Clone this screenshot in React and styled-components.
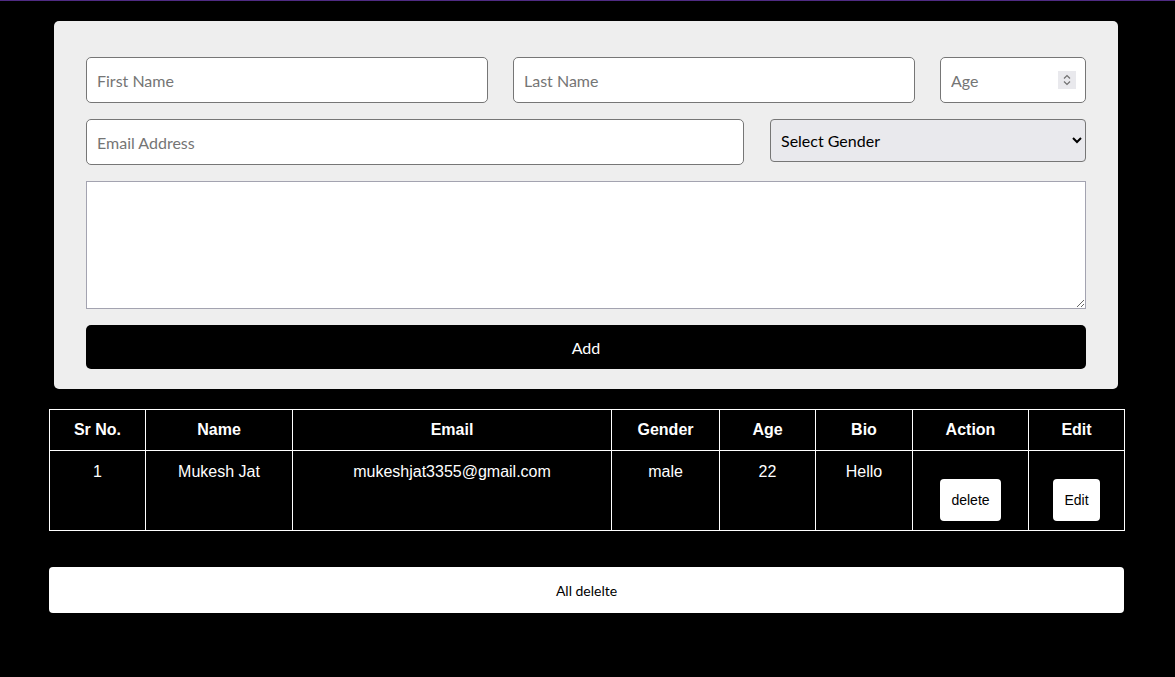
import React, { useState } from "react";
import styled, { createGlobalStyle } from "styled-components";

const GlobalStyle = createGlobalStyle`
  html, body {
    margin: 0;
    padding: 0;
    background: #000000;
  }
  body {
    font-family: "Lato", "Liberation Sans", sans-serif;
    border-top: 1px solid #4f2b83;
    min-height: 676px;
  }
  * {
    box-sizing: border-box;
  }
`;

const users = [
  {
    id: 1,
    firstName: "Mukesh",
    lastName: "Jat",
    email: "mukeshjat3355@gmail.com",
    gender: "male",
    age: 22,
    bio: "Hello",
  },
];

const columns = [
  { label: "Sr No.", width: 96 },
  { label: "Name", width: 147 },
  { label: "Email", width: 319 },
  { label: "Gender", width: 108 },
  { label: "Age", width: 96 },
  { label: "Bio", width: 97 },
  { label: "Action", width: 116 },
  { label: "Edit", width: 96 },
];

const App = () => {
  const [list, setList] = useState(users);

  return (
    <>
      <GlobalStyle />
      <Container>
        <Form onSubmit={(e) => e.preventDefault()}>
          <Row>
            <Input type="text" placeholder="First Name" />
            <Input type="text" placeholder="Last Name" />
            <NumberField>
              <Input type="number" placeholder="Age" />
              {/* spin buttons as the newer chrome draws them */}
              <Spinner viewBox="0 0 18 18">
                <path d="M6 7.5 L9 4.5 L12 7.5" />
                <path d="M6 10.5 L9 13.5 L12 10.5" />
              </Spinner>
            </NumberField>
          </Row>
          <Row className="second">
            <Input type="email" placeholder="Email Address" />
            <Select defaultValue="">
              <option value="">Select Gender</option>
              <option value="male">male</option>
              <option value="female">female</option>
            </Select>
          </Row>
          <TextArea />
          <AddButton type="submit">Add</AddButton>
        </Form>

        <Table>
          <colgroup>
            {columns.map((c) => (
              <Col key={c.label} $w={c.width} />
            ))}
          </colgroup>
          <thead>
            <tr>
              {columns.map((c) => (
                <Th key={c.label}>{c.label}</Th>
              ))}
            </tr>
          </thead>
          <tbody>
            {list.map((u, i) => (
              <tr key={u.id}>
                <Td>{i + 1}</Td>
                <Td>
                  {u.firstName} {u.lastName}
                </Td>
                <Td>{u.email}</Td>
                <Td>{u.gender}</Td>
                <Td>{u.age}</Td>
                <Td>{u.bio}</Td>
                <Td>
                  <CellButton
                    onClick={() => setList(list.filter((x) => x.id !== u.id))}
                  >
                    delete
                  </CellButton>
                </Td>
                <Td>
                  <CellButton>Edit</CellButton>
                </Td>
              </tr>
            ))}
          </tbody>
        </Table>

        <ClearButton onClick={() => setList([])}>All delelte</ClearButton>
      </Container>
    </>
  );
};

const Container = styled.div`
  width: 1075px;
  margin: 20px 0 0 49px;
`;

const Form = styled.form`
  display: flex;
  flex-direction: column;
  gap: 16px;
  margin: 0 6px 0 5px;
  padding: 36px 32px 20px;
  background: #eeeeee;
  border-radius: 5px;
`;

const Row = styled.div`
  display: grid;
  grid-template-columns: 1fr 1fr 146px;
  gap: 25px;
  align-items: start;
  &.second {
    grid-template-columns: 658px 1fr;
    gap: 26px;
  }
`;

const NumberField = styled.div`
  position: relative;
`;

const Spinner = styled.svg`
  position: absolute;
  top: 14px;
  right: 10px;
  width: 18px;
  height: 18px;
  background: #e9e9ed;
  fill: none;
  stroke: #707070;
  stroke-width: 1.2;
  pointer-events: none;
`;

const Input = styled.input`
  height: 46px;
  width: 100%;
  padding: 0 10px;
  border: 1px solid #767676;
  border-radius: 5px;
  background: #ffffff;
  font-family: "Lato", sans-serif;
  font-size: 16px;
  color: #000000;
  outline: none;
  -moz-appearance: textfield;
  &::placeholder {
    color: #757575;
  }
  &::-webkit-inner-spin-button,
  &::-webkit-outer-spin-button {
    -webkit-appearance: none;
    margin: 0;
  }
`;

const Select = styled.select`
  height: 43px;
  width: 100%;
  padding: 0 6px;
  border: 1px solid #767676;
  border-radius: 4px;
  background-color: #e9e9ed;
  font-family: "Lato", sans-serif;
  font-size: 16px;
  color: #000000;
`;

const TextArea = styled.textarea`
  display: block;
  width: 100%;
  height: 128px;
  border: 1px solid #a3a3b0;
  background: #ffffff;
  font-family: "Lato", sans-serif;
  font-size: 16px;
`;

const AddButton = styled.button`
  height: 44px;
  width: 100%;
  border: none;
  border-radius: 5px;
  background: #000000;
  color: #ffffff;
  font-family: "Lato", sans-serif;
  font-size: 16px;
  cursor: pointer;
`;

const Table = styled.table`
  width: 1075px;
  margin-top: 20px;
  border-collapse: collapse;
  table-layout: fixed;
  font-family: "Liberation Sans", Arial, sans-serif;
  font-size: 16px;
  color: #ffffff;
`;

const Col = styled.col`
  width: ${({ $w }) => $w}px;
`;

const Th = styled.th`
  height: 41px;
  padding: 0 8px;
  border: 1px solid #ffffff;
  font-weight: bold;
  text-align: center;
`;

const Td = styled.td`
  height: 80px;
  padding: 12px 8px 8px;
  border: 1px solid #ffffff;
  text-align: center;
  vertical-align: top;
`;

const CellButton = styled.button`
  margin-top: 16px;
  padding: 12px 11px;
  border: none;
  border-radius: 4px;
  background: #ffffff;
  color: #000000;
  font-family: "Liberation Sans", Arial, sans-serif;
  font-size: 14px;
  line-height: 18px;
  cursor: pointer;
`;

const ClearButton = styled.button`
  display: block;
  width: 100%;
  height: 46px;
  margin-top: 36px;
  border: none;
  border-radius: 4px;
  background: #ffffff;
  color: #000000;
  font-family: "Lato", sans-serif;
  font-size: 14px;
  cursor: pointer;
`;

export default App;
